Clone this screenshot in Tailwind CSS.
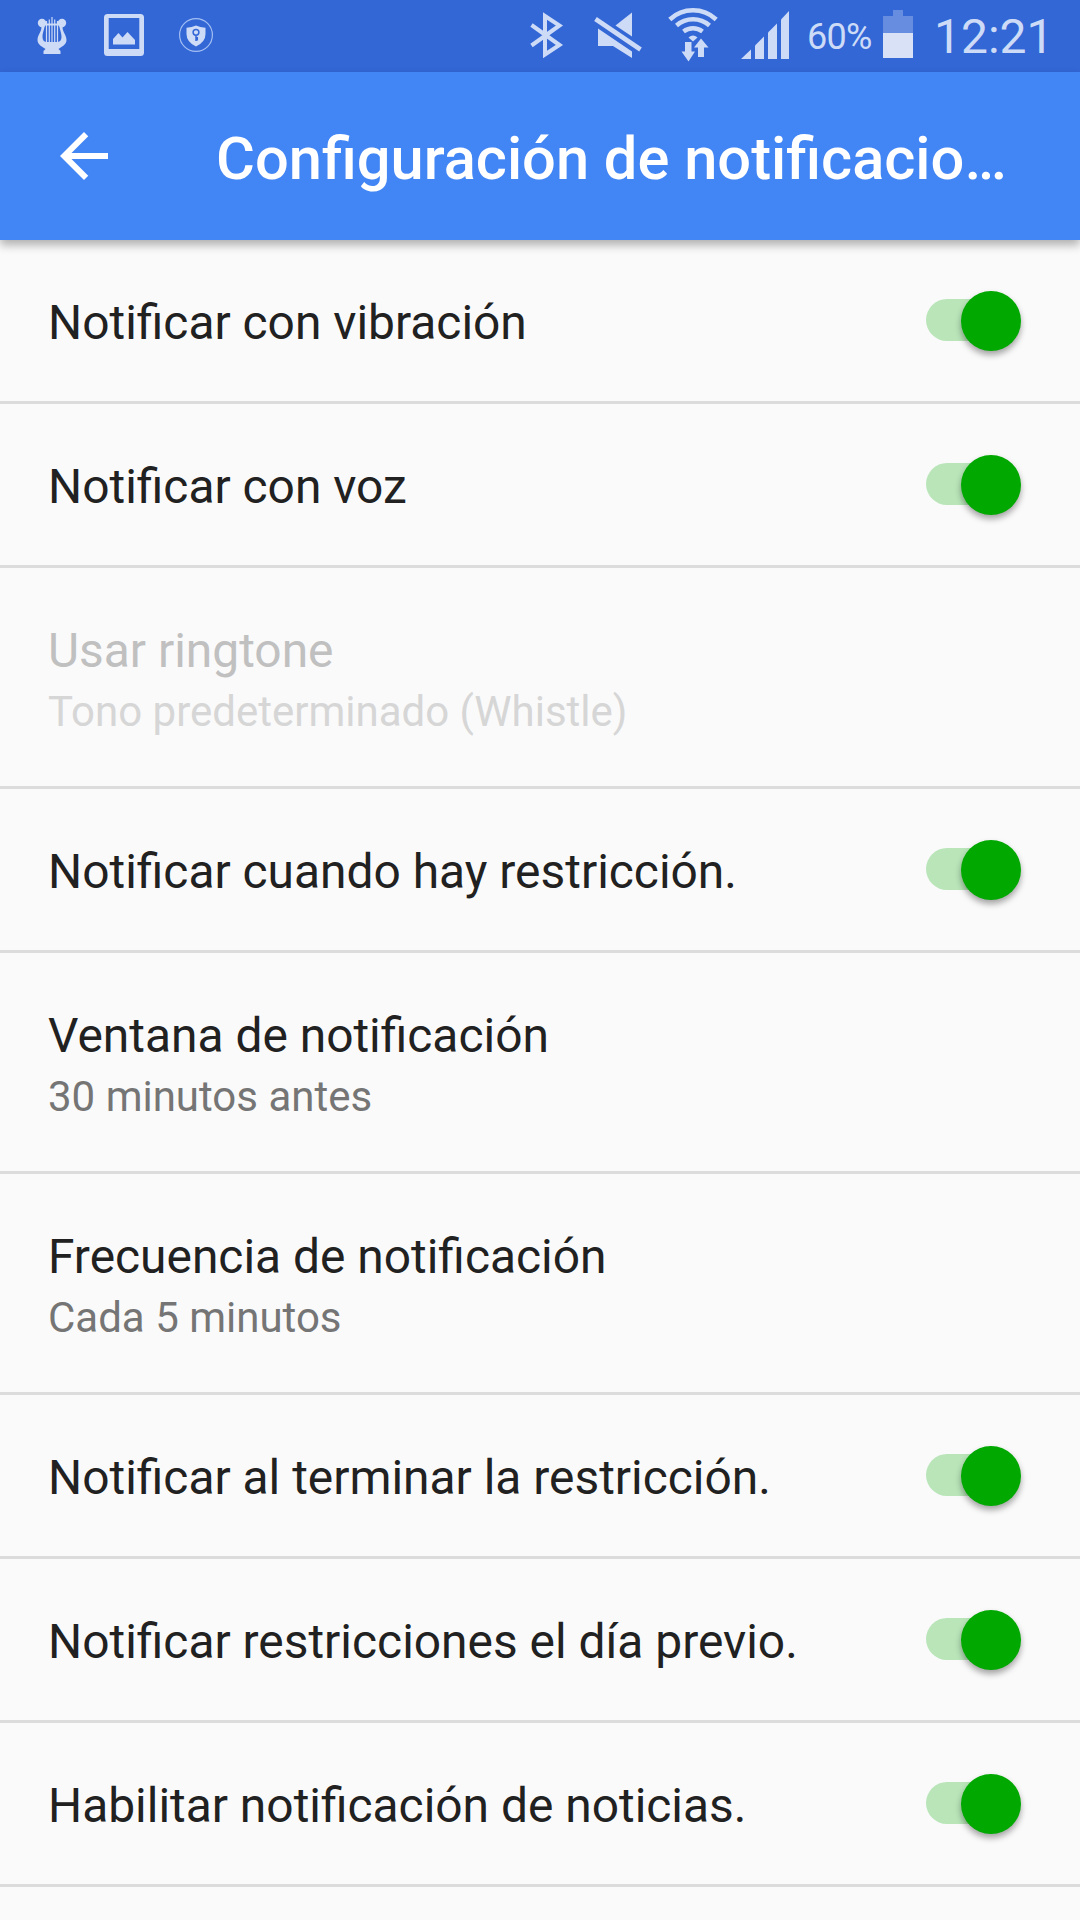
<!DOCTYPE html>
<html lang="es">
<head>
    <meta charset="UTF-8">
    <meta name="viewport" content="width=device-width, initial-scale=1.0">
    <title>Configuración de notificaciones</title>
    <script src="https://cdn.jsdelivr.net/npm/@tailwindcss/browser@4"></script>
</head>
<body class="flex flex-col h-screen overflow-hidden bg-[#fafafa] font-[Roboto,sans-serif]">
    <!-- Status bar -->
    <div class="h-[72px] shrink-0 bg-[#3367d6] text-[#cddbf7] flex items-center justify-between pl-[37px] pr-[33px]">
        <div class="flex items-center">
            <svg class="w-[30px] h-[72px]" viewBox="37 0 30 72" fill="currentColor">
                <circle cx="42" cy="23" r="4.2"></circle>
                <circle cx="62" cy="23" r="4.2"></circle>
                <path d="M41 25C43 31 37.500 34 37.500 40C37.500 45 43 47 45.500 49L43.500 51V54H60.500V51L58.500 49C61 47 66.500 45 66.500 40C66.500 34 61 31 63 25L58.500 23C60 30 61.500 33 61.500 37C61.500 40 60 42 57 42H47C44 42 42.500 40 42.500 37C42.500 33 44 30 45.500 23Z"></path>
                <path d="M44 24.500H60" stroke="currentColor" stroke-width="2"></path>
                <path d="M46.500 21V42M49.300 19.500V42M52 17V42M54.700 19.500V42M57.500 21V42" stroke="currentColor" stroke-width="1.200"></path>
            </svg>
            <svg class="w-10 h-[72px] ml-[37px]" viewBox="104 0 40 72" fill="currentColor">
                <path fill-rule="evenodd" d="M107.500 14H140.500Q144 14 144 17.500V52.500Q144 56 140.500 56H107.500Q104 56 104 52.500V17.500Q104 14 107.500 14ZM108.700 18V49H139.300V18Z"></path>
                <path d="M113 44.500V39L118.500 33L122.500 37.500L127.500 32L135 40V44.500Z"></path>
            </svg>
            <svg class="w-[34px] h-[72px] ml-[35px]" viewBox="179 0 34 72" fill="none">
                <circle cx="196" cy="35" r="16.400" stroke="#a3bff3" stroke-width="1.200"></circle>
                <path d="M186.500 27.700Q192 27.500 196 25.500Q200 27.500 205.500 27.700V34Q205.500 42 196 46.500Q186.500 42 186.500 34Z" fill="currentColor"></path>
                <circle cx="196" cy="32.300" r="2.900" stroke="#3367d6" stroke-width="1.500"></circle>
                <path d="M196 35.500V41M197.300 37V40.500" stroke="#3367d6" stroke-width="1.500"></path>
            </svg>
        </div>
        <div class="flex items-center">
            <svg class="w-[34px] h-[72px]" viewBox="530 0 34 72" fill="none" stroke="currentColor" stroke-width="4">
                <path d="M531.500 25L559.500 45L545 54.500V16L559.500 25.500L531.500 45.500"></path>
            </svg>
            <svg class="w-12 h-[72px] ml-[30px]" viewBox="594 0 48 72" fill="currentColor">
                <path d="M632 12.500V36.500L615.500 25.500Z"></path>
                <path d="M598 28.500L632 51.500V58L613 46H598Z"></path>
                <path d="M595.500 19L640.500 49.500" stroke="currentColor" stroke-width="4.600"></path>
            </svg>
            <svg class="w-[50px] h-[72px] ml-[26px]" viewBox="668 0 50 72" fill="none">
                <g stroke="currentColor" stroke-width="4.500">
                    <path d="M669.800 19.500A34 34 0 0 1 716.200 19.500"></path>
                    <path d="M676.500 25.500A25 25 0 0 1 709.500 25.500"></path>
                    <path d="M683.500 31.500A16 16 0 0 1 702.500 31.500"></path>
                </g>
                <path d="M688.500 37.500Q693 33.500 697.500 37.500L693 41.500Z" fill="currentColor"></path>
                <path d="M685 42H691.500V51.500H695L688.500 61.500L681.500 51.500H685Z" fill="currentColor"></path>
                <path d="M698 57V47.500H694L701 38.500L708.500 47.500H704V57Z" fill="currentColor"></path>
            </svg>
            <svg class="w-12 h-[72px] ml-[23px]" viewBox="741 0 48 72" fill="currentColor">
                <path d="M741 59L751 49.500V59Z"></path>
                <path d="M755 59V45.500L764 36.500V59Z"></path>
                <path d="M768 59V32.500L777 23.500V59Z"></path>
                <path d="M781 59V19.500L789 11V59Z"></path>
            </svg>
            <span class="w-[67px] ml-[18px] mt-[2px] text-[36px] leading-[42px] tracking-[-0.7px]">60%</span>
            <svg class="w-[30px] h-[72px] ml-[9px]" viewBox="883 0 30 72">
                <path d="M893 10H903V16H913V33H883V16H893Z" fill="#668de0"></path>
                <path d="M883 33H913V58H883Z" fill="#d9e1f7"></path>
            </svg>
            <span class="w-[113px] ml-[21px] mt-[2px] text-[48px] leading-[70px]">12:21</span>
        </div>
    </div>

    <!-- App bar -->
    <header class="relative h-[168px] shrink-0 bg-[#4285f4] text-white flex items-center pl-[60px] shadow-[0_5px_9px_rgba(0,0,0,0.3)]">
        <button class="shrink-0" title="Atrás">
            <svg class="w-12 h-12" viewBox="4 4 16 16" fill="currentColor">
                <path d="M20 11H7.830l5.590-5.590L12 4l-8 8 8 8 1.410-1.410L7.830 13H20v-2z"></path>
            </svg>
        </button>
        <h1 class="ml-[108px] pt-[5px] whitespace-nowrap text-[59.6px] leading-[80px] font-medium">Configuración de notificacio…</h1>
    </header>

    <!-- Settings list -->
    <main class="flex flex-col text-[#212121]">
        <div class="h-[164px] flex items-start justify-between pl-12 pr-[58px] border-b-3 border-[#dcdcdc]">
            <p class="pt-[55px] text-[47.9px] leading-[56px]">Notificar con vibración</p>
            <div class="mt-[50px] w-24 h-[60px] flex items-center">
                <div class="w-[90px] h-[42px] rounded-full bg-[#b9e5b9] flex items-center">
                    <div class="ml-[35px] mt-px w-[60px] h-[60px] shrink-0 rounded-full bg-[#00a800] shadow-[0_4px_6px_rgba(0,0,0,0.35)]"></div>
                </div>
            </div>
        </div>
        <div class="h-[164px] flex items-start justify-between pl-12 pr-[58px] border-b-3 border-[#dcdcdc]">
            <p class="pt-[55px] text-[47.9px] leading-[56px]">Notificar con voz</p>
            <div class="mt-[50px] w-24 h-[60px] flex items-center">
                <div class="w-[90px] h-[42px] rounded-full bg-[#b9e5b9] flex items-center">
                    <div class="ml-[35px] mt-px w-[60px] h-[60px] shrink-0 rounded-full bg-[#00a800] shadow-[0_4px_6px_rgba(0,0,0,0.35)]"></div>
                </div>
            </div>
        </div>
        <!-- Disabled while voice is on -->
        <div class="h-[221px] pl-12 pt-[55px] border-b-3 border-[#dcdcdc]">
            <p class="text-[47.9px] leading-[56px] text-[#c0c0c0]">Usar ringtone</p>
            <p class="mt-2 text-[42px] leading-[50px] text-[#d6d6d6]">Tono predeterminado (Whistle)</p>
        </div>
        <div class="h-[164px] flex items-start justify-between pl-12 pr-[58px] border-b-3 border-[#dcdcdc]">
            <p class="pt-[55px] text-[47.9px] leading-[56px]">Notificar cuando hay restricción.</p>
            <div class="mt-[50px] w-24 h-[60px] flex items-center">
                <div class="w-[90px] h-[42px] rounded-full bg-[#b9e5b9] flex items-center">
                    <div class="ml-[35px] mt-px w-[60px] h-[60px] shrink-0 rounded-full bg-[#00a800] shadow-[0_4px_6px_rgba(0,0,0,0.35)]"></div>
                </div>
            </div>
        </div>
        <div class="h-[221px] pl-12 pt-[55px] border-b-3 border-[#dcdcdc]">
            <p class="text-[47.9px] leading-[56px]">Ventana de notificación</p>
            <p class="mt-2 text-[42px] leading-[50px] text-[#757575]">30 minutos antes</p>
        </div>
        <div class="h-[221px] pl-12 pt-[55px] border-b-3 border-[#dcdcdc]">
            <p class="text-[47.9px] leading-[56px]">Frecuencia de notificación</p>
            <p class="mt-2 text-[42px] leading-[50px] text-[#757575]">Cada 5 minutos</p>
        </div>
        <div class="h-[164px] flex items-start justify-between pl-12 pr-[58px] border-b-3 border-[#dcdcdc]">
            <p class="pt-[55px] text-[47.9px] leading-[56px]">Notificar al terminar la restricción.</p>
            <div class="mt-[50px] w-24 h-[60px] flex items-center">
                <div class="w-[90px] h-[42px] rounded-full bg-[#b9e5b9] flex items-center">
                    <div class="ml-[35px] mt-px w-[60px] h-[60px] shrink-0 rounded-full bg-[#00a800] shadow-[0_4px_6px_rgba(0,0,0,0.35)]"></div>
                </div>
            </div>
        </div>
        <div class="h-[164px] flex items-start justify-between pl-12 pr-[58px] border-b-3 border-[#dcdcdc]">
            <p class="pt-[55px] text-[47.9px] leading-[56px]">Notificar restricciones el día previo.</p>
            <div class="mt-[50px] w-24 h-[60px] flex items-center">
                <div class="w-[90px] h-[42px] rounded-full bg-[#b9e5b9] flex items-center">
                    <div class="ml-[35px] mt-px w-[60px] h-[60px] shrink-0 rounded-full bg-[#00a800] shadow-[0_4px_6px_rgba(0,0,0,0.35)]"></div>
                </div>
            </div>
        </div>
        <div class="h-[164px] flex items-start justify-between pl-12 pr-[58px] border-b-3 border-[#dcdcdc]">
            <p class="pt-[55px] text-[47.9px] leading-[56px]">Habilitar notificación de noticias.</p>
            <div class="mt-[50px] w-24 h-[60px] flex items-center">
                <div class="w-[90px] h-[42px] rounded-full bg-[#b9e5b9] flex items-center">
                    <div class="ml-[35px] mt-px w-[60px] h-[60px] shrink-0 rounded-full bg-[#00a800] shadow-[0_4px_6px_rgba(0,0,0,0.35)]"></div>
                </div>
            </div>
        </div>
    </main>
</body>
</html>
